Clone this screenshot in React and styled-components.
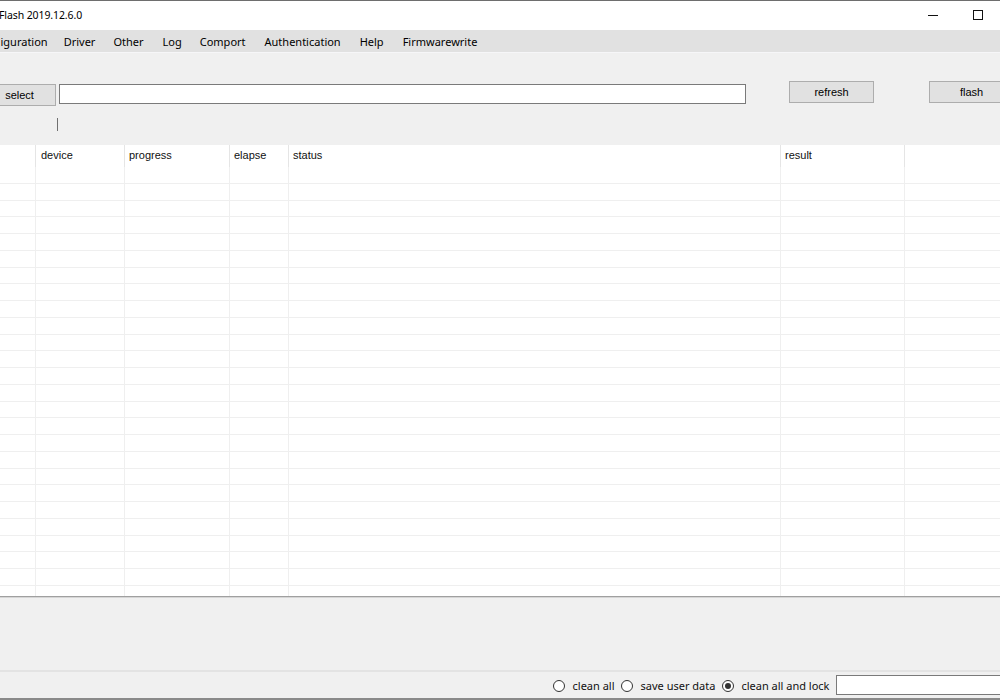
import React from "react";
import styled, { createGlobalStyle } from "styled-components";

const Global = createGlobalStyle`
  html, body { margin: 0; padding: 0; background: #f0f0f0; overflow: hidden; }
  #root { width: 1000px; height: 700px; }
`;

const Window = styled.div`
  width: 1000px;
  height: 700px;
  overflow: hidden;
  display: flex;
  flex-direction: column;
  background: #f0f0f0;
  font-family: "Noto Sans", "Segoe UI", sans-serif;
  font-size: 11px;
  color: #000;
`;

const TitleBar = styled.div`
  height: 30px;
  box-sizing: border-box;
  border-top: 1px solid #6e6e6e;
  background: #fff;
  display: flex;
  align-items: center;
`;

const Title = styled.div`
  flex: 1;
  margin-left: -1px;
  white-space: nowrap;
  padding-bottom: 1px;
  font-size: 10.5px;
  letter-spacing: -0.1px;
`;

const Caption = styled.div`
  width: 45px;
  height: 29px;
  display: flex;
  align-items: center;
  justify-content: center;
`;

const MinGlyph = styled.span`
  width: 10px;
  height: 1px;
  background: #111;
`;

const MaxGlyph = styled.span`
  width: 10px;
  height: 10px;
  box-sizing: border-box;
  border: 1px solid #111;
  margin-top: -1px;
`;

const MenuBar = styled.div`
  height: 23px;
  box-sizing: border-box;
  background: #e1e1e1;
  border-bottom: 1px solid #f6f6f8;
  display: flex;
  align-items: center;
  white-space: nowrap;
`;

const MenuItem = styled.span`
  padding: 1px 9.5px 0;
  line-height: 21px;
  &:first-child {
    margin-left: -9px;
    padding-right: 6.5px;
  }
  &:nth-child(2) { padding-right: 8.5px; }
  &:nth-child(4) { padding-right: 8.5px; }
`;

const ToolArea = styled.div`
  height: 92px;
  box-sizing: border-box;
  padding-top: 28px;
  display: flex;
  flex-direction: column;
`;

const ToolRow = styled.div`
  display: flex;
  align-items: flex-start;
  white-space: nowrap;
`;

const Button = styled.button`
  flex: none;
  box-sizing: border-box;
  height: 22px;
  width: ${(p) => p.$w}px;
  margin-left: ${(p) => p.$ml || 0}px;
  margin-top: ${(p) => p.$mt || 0}px;
  padding: 0;
  background: #e1e1e1;
  border: 1px solid #adadad;
  font-family: "Liberation Sans", Arial, sans-serif;
  font-size: 11px;
  color: #000;
  text-align: center;
  line-height: 20px;
`;

const PathInput = styled.div`
  flex: none;
  box-sizing: border-box;
  height: 20px;
  width: ${(p) => p.$w}px;
  margin-left: ${(p) => p.$ml || 0}px;
  margin-top: ${(p) => p.$mt || 0}px;
  background: #fff;
  border: 1px solid #7a7a7a;
`;

const Tick = styled.div`
  width: 1px;
  height: 13px;
  margin-left: 57px;
  margin-top: 12px;
  background: #707070;
`;

const cols = "36px 89px 105px 59px 492px 124px 1fr";

const Table = styled.div`
  height: 452px;
  box-sizing: border-box;
  background: #fff;
  border-bottom: 1px solid #a0a0a0;
  overflow: hidden;
  font-family: "Liberation Sans", Arial, sans-serif;
  font-size: 11px;
`;

const HeaderRow = styled.div`
  display: grid;
  grid-template-columns: ${cols};
  height: 22px;
`;

const HeaderCell = styled.div`
  box-sizing: border-box;
  border-right: 1px solid #e5e5e5;
  padding: 4px 0 0 4px;
  color: #111;
  white-space: nowrap;
  &:nth-child(2) { padding-left: 5px; }
  &:last-child { border-right: none; }
`;

const Body = styled.div`
  height: 429px;
  overflow: hidden;
`;

const Row = styled.div`
  display: grid;
  grid-template-columns: ${cols};
  height: 16.75px;
`;

const Cell = styled.div`
  box-sizing: border-box;
  border-right: 1px solid #efefef;
  border-bottom: 1px solid #efefef;
  &:last-child { border-right: none; }
`;

const Panel = styled.div`
  height: 73px;
  box-sizing: border-box;
  border-top: 1px solid #d6d6d6;
  background: #f0f0f0;
`;

const BottomBar = styled.div`
  height: 30px;
  box-sizing: border-box;
  border-top: 2px solid #e3e3e3;
  border-bottom: 2px solid #8a8a8a;
  display: flex;
  align-items: center;
  justify-content: flex-end;
  gap: 6.5px;
  white-space: nowrap;
`;

const RadioOption = styled.label`
  display: flex;
  align-items: center;
  gap: 7.5px;
  color: #111;
  padding-top: 1px;
`;

const RadioCircle = styled.span`
  width: 12px;
  height: 12px;
  box-sizing: border-box;
  border-radius: 50%;
  border: 1px solid #333;
  background: #fff;
  display: flex;
  align-items: center;
  justify-content: center;
  &::after {
    content: "";
    width: 6px;
    height: 6px;
    border-radius: 50%;
    background: ${(p) => (p.$checked ? "#333" : "transparent")};
  }
`;

const RadioText = styled.span`
  font-size: 11px;
`;

const BottomInput = styled.div`
  width: 172px;
  height: 20px;
  box-sizing: border-box;
  margin-right: -8px;
  background: #fff;
  border: 1px solid #7a7a7a;
`;

const headers = ["", "device", "progress", "elapse", "status", "result", ""];
const menus = ["iguration", "Driver", "Other", "Log", "Comport", "Authentication", "Help", "Firmwarewrite"];

export default function App() {
  return (
    <>
      <Global />
      <Window>
        <TitleBar>
          <Title>Flash 2019.12.6.0</Title>
          <Caption><MinGlyph /></Caption>
          <Caption><MaxGlyph /></Caption>
        </TitleBar>
        <MenuBar>
          {menus.map((m) => (
            <MenuItem key={m}>{m}</MenuItem>
          ))}
        </MenuBar>
        <ToolArea>
          <ToolRow>
            <Button $w={73} $ml={-17} $mt={3}>select</Button>
            <PathInput $w={687} $ml={3} $mt={3} />
            <Button $w={85} $ml={43}>refresh</Button>
            <Button $w={85} $ml={55}>flash</Button>
          </ToolRow>
          <Tick />
        </ToolArea>
        <Table>
          <HeaderRow>
            {headers.map((h, i) => (
              <HeaderCell key={i}>{h}</HeaderCell>
            ))}
          </HeaderRow>
          <Body>
            {Array.from({ length: 26 }).map((_, r) => (
              <Row key={r}>
                {headers.map((_, c) => (
                  <Cell key={c} />
                ))}
              </Row>
            ))}
          </Body>
        </Table>
        <Panel />
        <BottomBar>
          <RadioOption><RadioCircle /><RadioText>clean all</RadioText></RadioOption>
          <RadioOption><RadioCircle /><RadioText>save user data</RadioText></RadioOption>
          <RadioOption><RadioCircle $checked /><RadioText>clean all and lock</RadioText></RadioOption>
          <BottomInput />
        </BottomBar>
      </Window>
    </>
  );
}
